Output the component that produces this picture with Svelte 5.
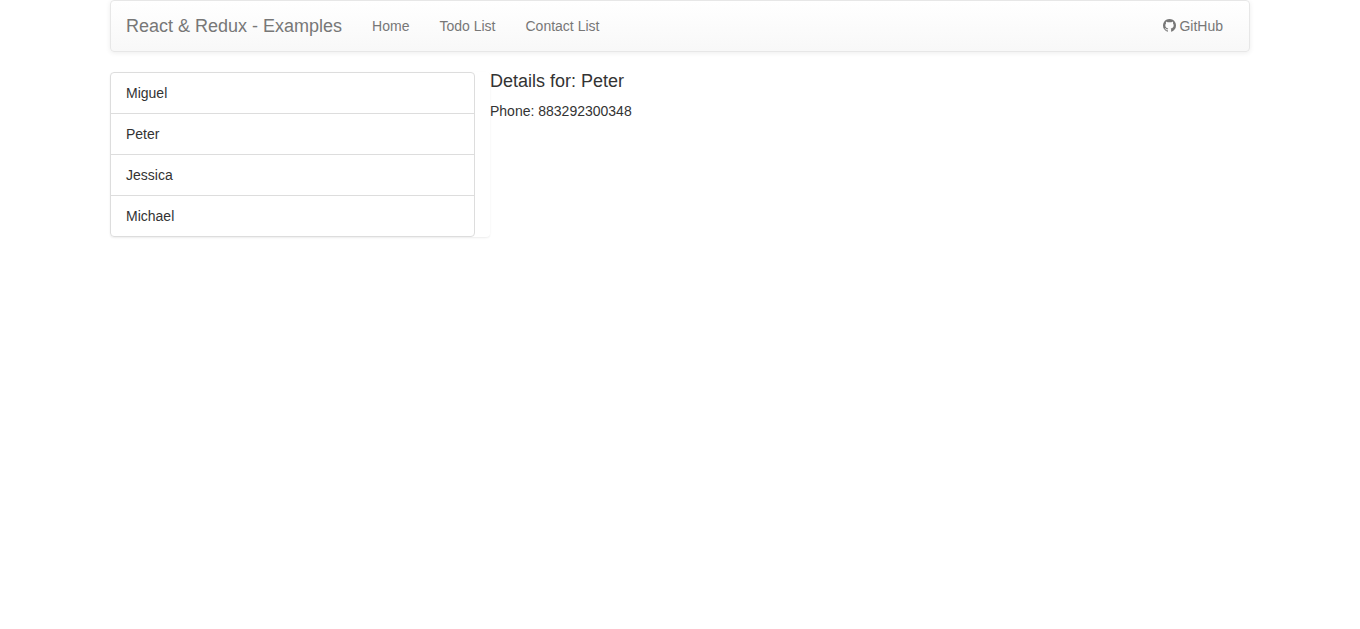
<script>
  const links = [
    { label: 'Home', href: '#home' },
    { label: 'Todo List', href: '#todos' },
    { label: 'Contact List', href: '#contacts' }
  ];
  const contacts = [
    { name: 'Miguel', phone: '883292300346' },
    { name: 'Peter', phone: '883292300348' },
    { name: 'Jessica', phone: '883292300350' },
    { name: 'Michael', phone: '883292300352' }
  ];
  let selected = $state(contacts[1]);
</script>

<div class="container">
  <nav class="navbar">
    <a class="brand" href="#home">React &amp; Redux - Examples</a>
    <ul class="links">
      {#each links as link}
        <li><a href={link.href}>{link.label}</a></li>
      {/each}
    </ul>
    <a class="github" href="#github">
      <svg viewBox="0 0 1536 1536" width="13" height="13" aria-hidden="true">
        <path d="M768 0q209 0 385.500 103t279.500 279.500 103 385.500q0 251-146.500 451.500t-378.500 277.500q-27 5-40-7t-13-30q0-3 .5-76.500t.5-134.500q0-97-52-142 57-6 102.500-18t94-39 81-66.500 53-105 20.500-150.500q0-119-79-206 37-91-8-204-28-9-81 11t-92 44l-38 24q-93-26-192-26t-192 26q-16-11-42.500-27t-83.500-38.500-85-13.500q-45 113-8 204-79 87-79 206 0 85 20.500 150t52.500 105 80.500 67 94 39 102.500 18q-39 36-49 103-21 10-45 15t-57 5-65.500-21.500-55.500-62.500q-19-32-48.500-52t-49.500-24l-20-3q-21 0-29 4.500t-5 11.500 9 14 13 12l7 5q22 10 43.500 38t31.500 51l10 23q13 38 44 61.500t67 30 69.500 7 55.500-3.500l23-4q0 38 .5 88.500t.5 54.500q0 18-13 30t-40 7q-232-77-378.500-277.500t-146.500-451.500q0-209 103-385.500t279.500-279.500 385.500-103z" />
      </svg>
      GitHub
    </a>
  </nav>

  <main class="row">
    <div class="column">
      <ul class="list">
        {#each contacts as contact}
          <li><button type="button" onclick={() => (selected = contact)}>{contact.name}</button></li>
        {/each}
      </ul>
    </div>
    <section class="details">
      <h4>Details for: {selected.name}</h4>
      <p>Phone: {selected.phone}</p>
    </section>
  </main>
</div>

<style>
  :global(body) {
    margin: 0;
    background: #fff;
  }
  .container {
    box-sizing: border-box;
    max-width: 1170px;
    margin: 0 auto;
    padding: 0 15px 20px;
    color: #333;
    font: 14px/20px "Liberation Sans", Arial, sans-serif;
  }
  ul {
    margin: 0;
    padding: 0;
    list-style: none;
  }
  .navbar {
    display: flex;
    align-items: center;
    min-height: 50px;
    margin-bottom: 20px;
    border: 1px solid #e7e7e7;
    border-radius: 4px;
    background: linear-gradient(to bottom, #fff 0%, #f8f8f8 100%);
    box-shadow: inset 0 1px 0 rgba(255, 255, 255, 0.15), 0 1px 5px rgba(0, 0, 0, 0.075);
  }
  .navbar a {
    padding: 15px;
    color: #777;
    text-decoration: none;
    text-shadow: 0 1px 0 rgba(255, 255, 255, 0.25);
  }
  .navbar .brand {
    font-size: 18px;
  }
  .links {
    display: flex;
  }
  .links a {
    display: block;
  }
  .navbar .github {
    margin-left: auto;
    padding-right: 26px;
  }
  .github svg {
    fill: currentColor;
    vertical-align: -1px;
  }
  .row {
    display: grid;
    grid-template-columns: 1fr 2fr;
    align-items: start;
  }
  .column {
    padding-right: 15px;
    border-radius: 4px;
    box-shadow: 0 1px 2px rgba(0, 0, 0, 0.075);
  }
  .list {
    border: 1px solid #ddd;
    border-radius: 4px;
  }
  .list li + li {
    border-top: 1px solid #ddd;
  }
  .list button {
    display: block;
    width: 100%;
    padding: 10px 15px;
    border: 0;
    background: none;
    color: inherit;
    font: inherit;
    text-align: left;
    cursor: pointer;
  }
  h4 {
    margin: 0 0 11px;
    font-size: 18px;
    font-weight: 400;
    line-height: 18px;
  }
  p {
    margin: 0;
  }
</style>
